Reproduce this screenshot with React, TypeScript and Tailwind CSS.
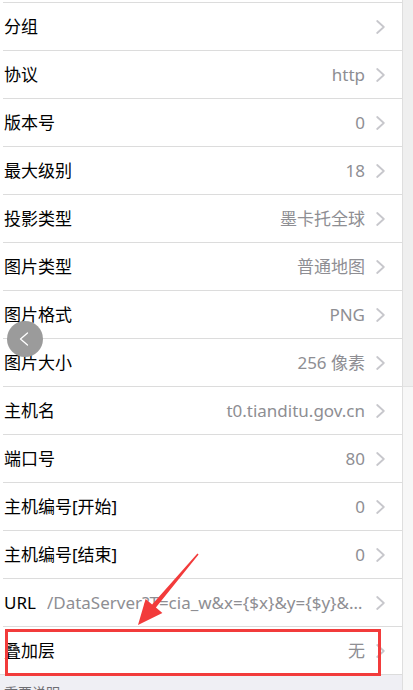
const rows: { label: string; value?: string }[] = [
  { label: "分组" },
  { label: "协议", value: "http" },
  { label: "版本号", value: "0" },
  { label: "最大级别", value: "18" },
  { label: "投影类型", value: "墨卡托全球" },
  { label: "图片类型", value: "普通地图" },
  { label: "图片格式", value: "PNG" },
  { label: "图片大小", value: "256 像素" },
  { label: "主机名", value: "t0.tianditu.gov.cn" },
  { label: "端口号", value: "80" },
  { label: "主机编号[开始]", value: "0" },
  { label: "主机编号[结束]", value: "0" },
  { label: "URL", value: "/DataServer?T=cia_w&x={$x}&y={$y}&l={$z}" },
  { label: "叠加层", value: "无" },
];

function Chevron() {
  return (
    <svg width="9" height="14" viewBox="0 0 9 14" className="shrink-0 ml-[11px]" aria-hidden="true">
      <path d="M1.2 1 L7.8 7 L1.2 13" fill="none" stroke="#c7c7cc" strokeWidth="1.8" strokeLinecap="round" strokeLinejoin="round" />
    </svg>
  );
}

export default function App() {
  return (
    <div
      className="relative w-[413px] h-[690px] overflow-hidden flex bg-white"
      style={{ fontFamily: '"Noto Sans", "Noto Sans CJK SC", sans-serif' }}
    >
      {/* main settings list */}
      <div className="w-[403px] shrink-0 flex flex-col bg-white border-r border-[#dedede] pt-[2px]">
        {rows.map((row) => (
          <div
            key={row.label}
            className="ml-[3px] h-[48px] shrink-0 flex items-center border-t border-[#dcdcdc] pl-px pr-[17px]"
          >
            <span className="shrink-0 text-[17px] text-black">{row.label}</span>
            <span className="ml-[11px] flex-1 min-w-0 truncate text-right text-[17px] text-[#8e8e93]">
              {row.value}
            </span>
            <Chevron />
          </div>
        ))}
        <div className="flex-1 bg-[#efeff4] border-t border-[#dcdcdc] pl-[4px] pt-[5px]">
          <span className="text-[14px] text-[#6d6d72]">重要说明</span>
        </div>
      </div>

      {/* page behind */}
      <div className="flex-1 flex flex-col">
        <div className="h-[386px] bg-[#efefef]" />
        <div className="flex-1 bg-[#f7f7f7] border-t border-[#e2e2e2]" />
      </div>

      {/* floating back button */}
      <div className="absolute left-[7px] top-[321px] w-[36px] h-[36px] rounded-full bg-[#9b9b9b]">
        <svg width="36" height="36" viewBox="0 0 36 36" aria-hidden="true">
          <path d="M20.5 12 L13.5 18 L20.5 24" fill="none" stroke="#ffffff" strokeWidth="1.3" strokeLinecap="round" strokeLinejoin="round" />
        </svg>
      </div>

      {/* red annotation */}
      <svg className="absolute left-0 top-0 pointer-events-none" width="413" height="690" viewBox="0 0 413 690" aria-hidden="true">
        <rect x="6.5" y="630.5" width="373" height="44" fill="none" stroke="#f23b3b" strokeWidth="3" />
        <polygon
          points="197.4,553.6 198.6,554.4 155.9,607.6 162.4,613.1 138,625 145.6,598.9 152.1,604.4"
          fill="#f23b3b"
        />
      </svg>
    </div>
  );
}
